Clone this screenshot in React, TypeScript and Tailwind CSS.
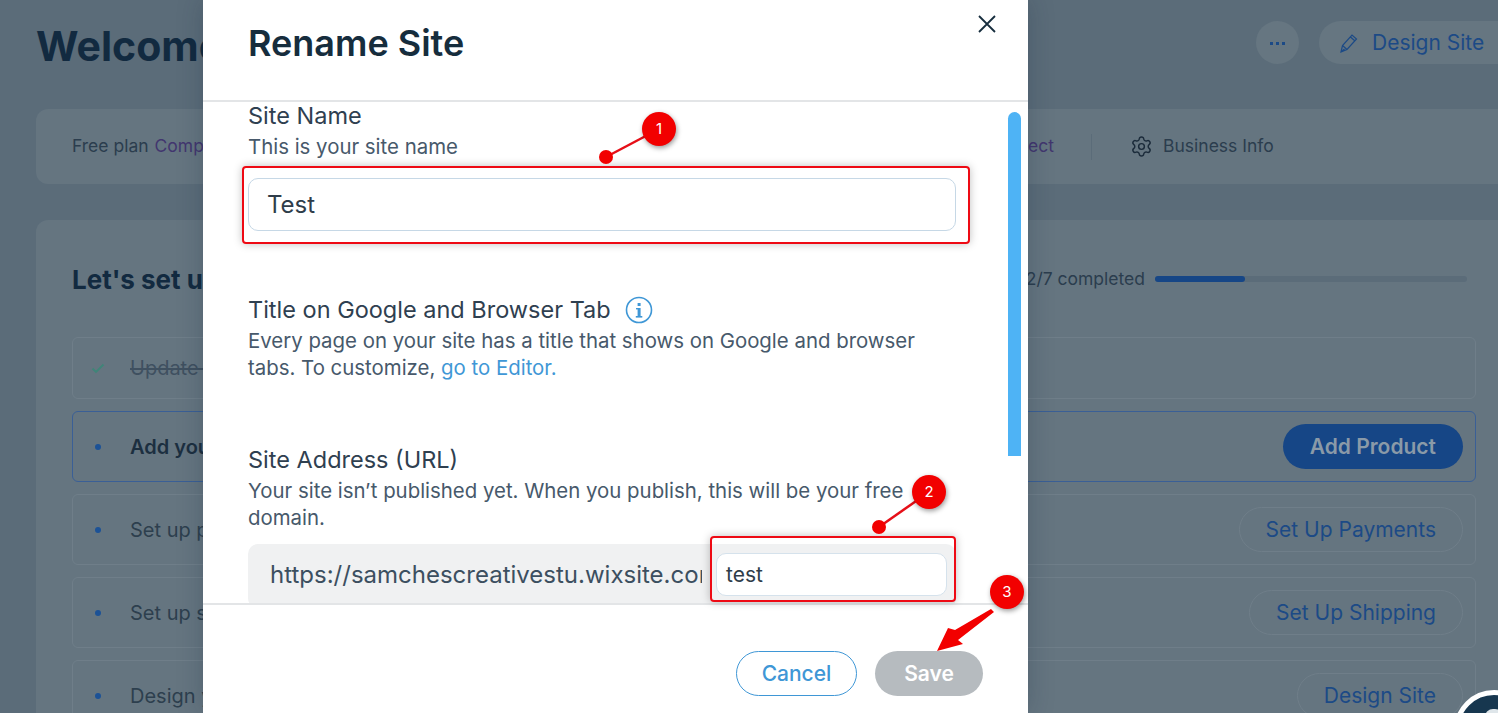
import React from "react";
import { Settings } from "lucide-react";

const font = { fontFamily: '"Inter", "Liberation Sans", sans-serif' };

function Row({ label, action, done, active }: { label: string; action?: string; done?: boolean; active?: boolean }) {
  return (
    <div className={`flex shrink-0 items-center rounded-md border pl-[18px] pr-[12px] ${active ? "h-[71px] border-[#3a5f96]" : done ? "h-[62px] border-[#6f7e89]" : "h-[71px] border-[#6f7e89]"}`}>
      <div className="flex w-[39px] shrink-0 items-center justify-start">
        {done ? (
          <svg width="14" height="14" viewBox="0 0 14 14" fill="none" stroke="#3f8578" strokeWidth="1.8"><path d="M1.5 7.5 5 11 12.5 3.5" /></svg>
        ) : (
          <span className="ml-[4px] h-[6px] w-[6px] rounded-full bg-[#1c5296]" />
        )}
      </div>
      <span className={`text-[20px] ${done ? "text-[#3f5060] line-through" : active ? "font-semibold text-[#1c2f40]" : "text-[#2d3f4e]"}`}>{label}</span>
      {action && (
        <span className={`ml-auto flex h-[45px] items-center rounded-full text-[21px] ${active ? "bg-[#164686] px-[27px] font-semibold text-[#8a9aa8]" : "border border-[#6f7e89] px-[26px] text-[#1c4a86]"}`}>{action}</span>
      )}
    </div>
  );
}

export default function App() {
  return (
    <div style={font} className="relative h-[713px] w-[1498px] overflow-hidden bg-[#5b6c79]">
      {/* Underlying dashboard */}
      <div className="w-[1540px] pl-[36px]">
        <header className="flex h-[109px] items-start justify-between pt-[21px]">
          <h1 className="text-[41px] font-bold leading-[50px] text-[#122a40]">Welcome back</h1>
          <div className="flex items-center gap-[20px]">
            <span className="flex h-[43px] w-[43px] items-center justify-center rounded-full bg-[#667681]">
              <svg width="16" height="4" viewBox="0 0 16 4" fill="#1c4a86"><rect x="0" y="1" width="3" height="3" /><rect x="6" y="1" width="3" height="3" /><rect x="12" y="1" width="3" height="3" /></svg>
            </span>
            <span className="flex h-[43px] w-[221px] items-center rounded-l-full bg-[#667681] pl-[21px] text-[21px] text-[#1c4a86]">
              <svg width="18" height="20" viewBox="0 0 18 20" fill="none" stroke="#1c4a86" strokeWidth="1.2" className="mr-[14px]"><path d="M1 19 2.5 12.5 12 2 16.5 6 7 16.5Z M2.5 12.5 7 16.5 M10.5 4 15 8 M1 19 4.5 16" /></svg>
              Design Site
            </span>
          </div>
        </header>

        <section className="flex h-[75px] items-center rounded-l-xl bg-[#657580] pl-[36px] text-[17.5px] text-[#2b3d4e]">
          <span>Free plan</span>
          <span className="ml-[6px] text-[#42366f]">Compare Plans</span>
          <span className="ml-[704px] text-[#42366f]">Connect</span>
          <span className="ml-[37px] h-[26px] w-px bg-[#5b6c79]" />
          <Settings size={23} strokeWidth={1.5} color="#1b2b3a" className="ml-[38px]" />
          <span className="ml-[10px]">Business Info</span>
        </section>

        <section className="mt-[36px] rounded-l-xl bg-[#657580] pl-[36px] pr-[64px] pt-[39px]">
          <div className="flex h-[40px] items-center">
            <h2 className="text-[26px] font-bold text-[#122a40]">Let's set up your site</h2>
            <span className="ml-auto text-[17.5px] text-[#2b3d4e]">2/7 completed</span>
            <div className="ml-[10px] mr-[9px] h-[6px] w-[312px] rounded-full bg-[#5b6c79]">
              <div className="h-full w-[90px] rounded-full bg-[#164686]" />
            </div>
          </div>
          <div className="mt-[38px] flex flex-col gap-[12px]">
            <Row done label="Update your site details" />
            <Row active label="Add your first product" action="Add Product" />
            <Row label="Set up payments" action="Set Up Payments" />
            <Row label="Set up shipping" action="Set Up Shipping" />
            <Row label="Design your site" action="Design Site" />
          </div>
        </section>
      </div>

      {/* Chat bubble */}
      <span className="absolute left-[1454px] top-[690px] h-[80px] w-[80px] rounded-full border-[5px] border-white bg-[#17374f]">
        <span className="absolute left-[26px] top-[14px] h-[16px] w-[18px] rounded-full bg-[#dfe6ea]" />
      </span>

      {/* Dialog */}
      <div className="absolute left-[203px] top-0 flex h-[713px] w-[825px] flex-col bg-white shadow-[0_0_24px_rgba(20,40,60,0.25)]">
        <div className="relative flex h-[102px] shrink-0 items-start border-b-2 border-[#e3e5e7] pl-[45px] pt-[20px]">
          <h2 className="text-[36px] font-semibold leading-[46px] text-[#162d3d]">Rename Site</h2>
          <svg width="20" height="20" viewBox="0 0 20 20" fill="none" stroke="#162d3d" strokeWidth="1.8" className="absolute left-[774px] top-[14px]"><path d="M2 2 18 18 M18 2 2 18" /></svg>
        </div>

        <div className="relative h-[503px] shrink-0 overflow-hidden border-b-2 border-[#e3e5e7] pl-[45px]">
          <div className="w-[708px]">
            <div className="text-[23.5px] leading-[28px] text-[#2f4050]">Site Name</div>
            <div className="mt-[3px] text-[20.4px] leading-[27px] text-[#47596b]">This is your site name</div>
            <div className="mt-[18px] flex h-[53px] items-center rounded-[10px] border border-[#c6d8e6] pl-[18px] pt-px text-[24px] text-[#2f3d4a]">Test</div>

            <div className="mt-[64px] flex items-center gap-[14px] text-[23.5px] leading-[30px] text-[#2f4050]">
              Title on Google and Browser Tab
              <svg width="28" height="28" viewBox="0 0 28 28" fill="none"><circle cx="14" cy="14" r="12.5" stroke="#3f97d6" strokeWidth="1.6" /><rect x="12.6" y="12" width="3" height="9" fill="#3f97d6" /><rect x="12.6" y="7" width="3" height="3" fill="#3f97d6" /><rect x="10.8" y="20" width="6.5" height="1.6" fill="#3f97d6" /><rect x="11" y="12" width="2" height="1.4" fill="#3f97d6" /></svg>
            </div>
            <div className="mt-[2px] w-[680px] text-[20.4px] leading-[27px] text-[#47596b]">
              Every page on your site has a title that shows on Google and browser tabs. To customize, <span className="text-[#3f97d6]">go to Editor.</span>
            </div>

            <div className="mt-[64px] text-[23.5px] leading-[30px] text-[#2f4050]">Site Address (URL)</div>
            <div className="mt-[2px] w-[680px] text-[20.4px] leading-[27px] text-[#47596b]">Your site isn’t published yet. When you publish, this will be your free domain.</div>
            <div className="mt-[13px] flex h-[64px] items-start rounded-[10px] bg-[#f0f1f2]">
              <div className="h-[60px] w-[454px] shrink-0 overflow-hidden whitespace-nowrap pl-[22px] text-[24px] leading-[62px] text-[#3c4f60]">https://samchescreativestu.wixsite.com</div>
              <div className="ml-[14px] mt-[9px] flex h-[43px] w-[231px] items-center rounded-[10px] border border-[#d5e2ec] bg-white pl-[9px] text-[21px] text-[#2f3d4a]">test</div>
            </div>
          </div>
          <div className="absolute left-[805px] top-[10px] h-[344px] w-[13px] rounded-t-full rounded-b-md bg-[#4eb3f5]" />
        </div>

        <div className="flex flex-1 items-start justify-end pr-[45px] pt-[46px]">
          <button className="h-[45px] w-[121px] rounded-full border border-[#3f97d6] text-[21px] font-medium text-[#3f97d6]">Cancel</button>
          <button className="ml-[18px] h-[45px] w-[108px] rounded-full bg-[#b6bbbf] text-[21px] font-semibold text-white">Save</button>
        </div>
      </div>

      {/* Annotations */}
      <div className="absolute left-[242px] top-[166px] h-[78px] w-[728px] rounded-[4px] border-2 border-[#ee0a14] shadow-[0_0_8px_rgba(0,0,0,0.25)]" />
      <div className="absolute left-[710px] top-[536px] h-[66px] w-[246px] rounded-[4px] border-2 border-[#ee0a14] shadow-[0_0_8px_rgba(0,0,0,0.25)]" />
      <svg className="absolute left-0 top-0" width="1498" height="713" viewBox="0 0 1498 713" fill="none">
        <path d="M606 157 659 129" stroke="#e60f18" strokeWidth="2.5" />
        <circle cx="606" cy="157" r="7" fill="#f20000" />
        <path d="M879 527 929 492" stroke="#e60f18" strokeWidth="2.5" />
        <circle cx="879" cy="527" r="7" fill="#f20000" />
        <path d="M991 609 955 630 948 628 937 651 963 644 958 640 994 612Z" fill="#f20000" />
      </svg>
      {[
        { n: "1", c: "left-[642px] top-[112px]" },
        { n: "2", c: "left-[912px] top-[475px]" },
        { n: "3", c: "left-[990px] top-[575px]" },
      ].map((b) => (
        <span key={b.n} className={`absolute ${b.c} flex h-[34px] w-[34px] items-center justify-center rounded-full bg-[#f20000] text-[15px] text-white shadow-[1px_2px_5px_rgba(0,0,0,0.4)]`}>{b.n}</span>
      ))}
    </div>
  );
}
